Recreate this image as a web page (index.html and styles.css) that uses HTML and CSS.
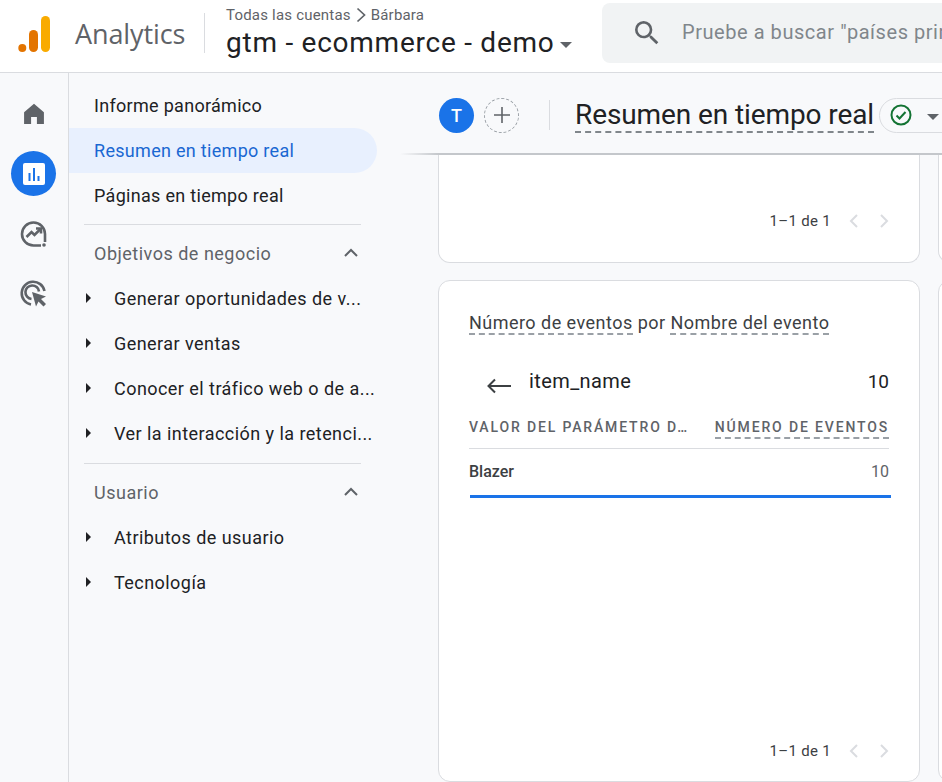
FILE: index.html
```html
<!DOCTYPE html>
<html lang="es">
<head>
    <meta charset="UTF-8">
    <title>Resumen en tiempo real - Analytics</title>
    <link rel="stylesheet" href="styles.css">
</head>
<body>

    <header class="topbar">
        <svg class="logo" width="34" height="38" viewBox="0 0 34 38">
            <circle cx="5.300" cy="33" r="4" fill="#e37400"/>
            <rect x="12" y="15" width="9" height="22" rx="4.500" fill="#e37400"/>
            <rect x="24" y="1" width="9" height="36" rx="4.500" fill="#f9ab00"/>
        </svg>
        <span class="brand">Analytics</span>
        <div class="topbar-sep"></div>
        <div class="account">
            <div class="crumbs">Todas las cuentas
                <svg width="12" height="16" viewBox="0 0 12 16"><path d="M2.500 1.500 9.500 8l-7 6.500" fill="none" stroke="#5f6368" stroke-width="1.700"/></svg>
                Bárbara</div>
            <div class="property">gtm - ecommerce - demo<span class="caret"></span></div>
        </div>
        <div class="search">
            <svg width="32" height="32" viewBox="0 0 24 24"><path d="M15.500 14h-.79l-.28-.27A6.470 6.470 0 0 0 16 9.500 6.500 6.500 0 1 0 9.500 16c1.610 0 3.090-.59 4.230-1.570l.27.28v.79l5 4.990L20.490 19l-4.990-5zm-6 0C7.010 14 5 11.990 5 9.500S7.010 5 9.500 5 14 7.010 14 9.500 11.990 14 9.500 14z" fill="#5f6368"/></svg>
            <span class="search-text">Pruebe a buscar "países principales por usuarios"</span>
        </div>
    </header>

    <div class="layout">
        <aside class="rail">
            <div class="rail-item">
                <svg width="28" height="28" viewBox="0 0 24 24"><path d="M12 3.200 3.500 10.600v10h6v-6h5v6h6v-10z" fill="#5f6368"/></svg>
            </div>
            <div class="rail-item rail-active">
                <svg width="24" height="24" viewBox="0 0 24 24"><rect x="1" y="1" width="22" height="22" rx="2" fill="#fff"/><path d="M6.500 11h2v8h-2zM11 6h2v13h-2zM15.500 14h2v5h-2z" fill="#1a73e8"/></svg>
            </div>
            <div class="rail-item">
                <svg width="28" height="28" viewBox="0 0 28 28" fill="none" stroke="#5f6368" stroke-width="2.600"><path d="M25 22V14A11.500 11.500 0 1 0 13.500 25.500H21"/><path d="M6.500 17l5-5 3 3 6-6"/><path d="M16 8.500h5v5"/><circle cx="24" cy="25" r="1.800" fill="#5f6368" stroke="none"/></svg>
            </div>
            <div class="rail-item">
                <svg width="28" height="28" viewBox="0 0 28 28" fill="none" stroke="#5f6368" stroke-width="2.600"><path d="M24.500 11A11.500 11.500 0 1 0 11 24.500"/><path d="M19 11.500A6.800 6.800 0 1 0 11.500 19"/><path d="M12 12l14 4.500-5 2.500 5 5-2.500 2.500-5-5-2.500 5z" fill="#5f6368" stroke="none"/></svg>
            </div>
        </aside>

        <nav class="sidenav">
            <a class="nav-link">Informe panorámico</a>
            <a class="nav-link nav-active">Resumen en tiempo real</a>
            <a class="nav-link">Páginas en tiempo real</a>
            <div class="nav-sep"></div>
            <div class="nav-group">Objetivos de negocio<svg width="16" height="10" viewBox="0 0 16 10"><path d="M2 8l6-6 6 6" fill="none" stroke="#5f6368" stroke-width="2"/></svg></div>
            <a class="nav-sub"><i class="tri"></i><span>Generar oportunidades de v...</span></a>
            <a class="nav-sub"><i class="tri"></i><span>Generar ventas</span></a>
            <a class="nav-sub"><i class="tri"></i><span>Conocer el tráfico web o de a...</span></a>
            <a class="nav-sub"><i class="tri"></i><span>Ver la interacción y la retenci...</span></a>
            <div class="nav-sep nav-sep-2"></div>
            <div class="nav-group">Usuario<svg width="16" height="10" viewBox="0 0 16 10"><path d="M2 8l6-6 6 6" fill="none" stroke="#5f6368" stroke-width="2"/></svg></div>
            <a class="nav-sub"><i class="tri"></i><span>Atributos de usuario</span></a>
            <a class="nav-sub"><i class="tri"></i><span>Tecnología</span></a>
        </nav>

        <main class="main">
            <div class="subhead">
                <span class="avatar">T</span>
                <span class="add-btn"><svg width="16" height="16" viewBox="0 0 16 16"><path d="M8 0v16M0 8h16" stroke="#5f6368" stroke-width="1.600"/></svg></span>
                <div class="subhead-sep"></div>
                <h1 class="page-title">Resumen en tiempo real</h1>
                <span class="status-pill">
                    <svg width="22" height="22" viewBox="0 0 22 22" fill="none" stroke="#137333" stroke-width="2"><circle cx="11" cy="11" r="9.500"/><path d="M6.500 11.500l3 3 6-6.500"/></svg>
                    <span class="caret caret-status"></span>
                </span>
            </div>
            <div class="cards">
                <section class="card card-cut">
                    <div class="pager">1–1 de 1
                        <svg width="14" height="16" viewBox="0 0 14 16"><path d="M10 2 4 8l6 6" fill="none" stroke="#dadce0" stroke-width="2"/></svg>
                        <svg width="14" height="16" viewBox="0 0 14 16"><path d="M4 2l6 6-6 6" fill="none" stroke="#dadce0" stroke-width="2"/></svg>
                    </div>
                </section>
                <section class="card card-cut"></section>
                <section class="card">
                    <h2 class="card-title"><span class="dashed">Número de eventos</span> por <span class="dashed">Nombre del evento</span></h2>
                    <div class="drill">
                        <svg width="26" height="16" viewBox="0 0 26 16"><path d="M25 8H3M9 1.500 2.500 8 9 14.500" fill="none" stroke="#3c4043" stroke-width="2"/></svg>
                        <span class="drill-name">item_name</span>
                        <span class="drill-count">10</span>
                    </div>
                    <div class="table-head">
                        <span class="col-label">VALOR DEL PARÁMETRO D…</span>
                        <span class="col-label col-dashed">NÚMERO DE EVENTOS</span>
                    </div>
                    <div class="table-row">
                        <span class="row-name">Blazer</span>
                        <span class="row-val">10</span>
                    </div>
                    <div class="bar"></div>
                    <div class="pager pager-end">1–1 de 1
                        <svg width="14" height="16" viewBox="0 0 14 16"><path d="M10 2 4 8l6 6" fill="none" stroke="#dadce0" stroke-width="2"/></svg>
                        <svg width="14" height="16" viewBox="0 0 14 16"><path d="M4 2l6 6-6 6" fill="none" stroke="#dadce0" stroke-width="2"/></svg>
                    </div>
                </section>
                <section class="card"></section>
            </div>
        </main>
    </div>

</body>
</html>
```

FILE: styles.css
```css
* {
    box-sizing: border-box;
}
html, body {
    margin: 0;
    height: 100%;
    overflow: hidden;
}
body {
    font-family: "Roboto", "Liberation Sans", sans-serif;
    background-color: #f8f9fb;
    color: #202124;
    display: flex;
    flex-direction: column;
}

/* Top bar */
.topbar {
    height: 73px;
    flex: none;
    display: flex;
    align-items: center;
    background-color: white;
    border-bottom: 1px solid #dadce0;
    padding-left: 17px;
    overflow: hidden;
}
.logo {
    flex: none;
    margin-top: -5px;
}
.brand {
    font-family: "Open Sans", sans-serif;
    font-size: 27px;
    letter-spacing: -0.1px;
    color: #5f6368;
    margin-left: 24px;
    margin-top: -6px;
    width: 127px;
    flex: none;
    white-space: nowrap;
}
.topbar-sep {
    width: 1px;
    height: 40px;
    background-color: #dadce0;
    margin: -6px 21px 0 2px;
    flex: none;
}
.account {
    flex: none;
    width: 376px;
    margin-top: -8px;
}
.crumbs {
    font-size: 15px;
    letter-spacing: 0.2px;
    color: #5f6368;
    line-height: 22px;
    display: flex;
    align-items: center;
    gap: 4px;
}
.property {
    font-size: 28px;
    letter-spacing: 0.75px;
    line-height: 34px;
    color: #202124;
    display: flex;
    align-items: center;
}
.caret {
    display: inline-block;
    width: 0;
    height: 0;
    border-left: 6px solid transparent;
    border-right: 6px solid transparent;
    border-top: 6px solid #5f6368;
    margin-left: 5px;
    margin-top: 3px;
}
.search {
    flex: none;
    width: 700px;
    height: 60px;
    margin-top: -6px;
    background-color: #f1f3f4;
    border-radius: 8px;
    display: flex;
    align-items: center;
    padding-left: 29px;
    gap: 19px;
}
.search-text {
    font-size: 20px;
    letter-spacing: 0.55px;
    color: #80868b;
    white-space: nowrap;
    margin-top: -2px;
}

/* Layout */
.layout {
    flex: 1;
    display: flex;
    min-height: 0;
}
.rail {
    width: 69px;
    flex: none;
    border-right: 1px solid #dadce0;
    display: flex;
    flex-direction: column;
    align-items: center;
    padding-top: 18px;
    gap: 15px;
    padding-right: 1px;
}
.rail-item {
    width: 45px;
    height: 45px;
    display: flex;
    align-items: center;
    justify-content: center;
    border-radius: 50%;
}
.rail-active {
    background-color: #1a73e8;
}

/* Side menu */
.sidenav {
    width: 331px;
    flex: none;
    padding-top: 10px;
}
.nav-link {
    display: block;
    width: 308px;
    height: 45px;
    line-height: 45px;
    padding-left: 25px;
    font-size: 18px;
    letter-spacing: 0.3px;
    color: #202124;
    border-radius: 0 23px 23px 0;
}
.nav-active {
    background-color: #e8f0fe;
    color: #1967d2;
}
.nav-sep {
    width: 277px;
    height: 1px;
    background-color: #dadce0;
    margin: 6px 0 0 15px;
}
.nav-sep-2 {
    margin-top: 7px;
}
.nav-group {
    width: 290px;
    height: 58px;
    padding-bottom: 2px;
    display: flex;
    align-items: center;
    justify-content: space-between;
    padding-left: 25px;
    font-size: 18px;
    letter-spacing: 0.5px;
    color: #5f6368;
}
.nav-group + .nav-sub {
    margin-top: -7px;
}
.nav-sub {
    display: flex;
    align-items: center;
    height: 45px;
    font-size: 18px;
    letter-spacing: 0.45px;
    color: #202124;
    padding-left: 17px;
    white-space: nowrap;
}
.nav-sub span {
    margin-left: 23px;
}
.tri {
    width: 0;
    height: 0;
    border-top: 5px solid transparent;
    border-bottom: 5px solid transparent;
    border-left: 5px solid #202124;
    margin-top: -2px;
}

/* Main column */
.main {
    flex: 1;
    min-width: 0;
    display: flex;
    flex-direction: column;
    overflow: hidden;
}
.subhead {
    height: 80px;
    flex: none;
    display: flex;
    align-items: center;
    padding: 4px 0 0 39px;
    background-color: #f8f9fb;
    position: relative;
    z-index: 1;
    white-space: nowrap;
}
/* line under the header, fades out towards the menu */
.subhead::after {
    content: "";
    position: absolute;
    left: 0;
    right: 0;
    bottom: -2px;
    height: 2px;
    background: linear-gradient(90deg, rgba(189, 193, 198, 0), #c4c7cb 38px);
}
.avatar {
    width: 35px;
    height: 35px;
    flex: none;
    border-radius: 50%;
    background-color: #1a73e8;
    color: white;
    font-size: 18px;
    font-weight: 500;
    text-align: center;
    line-height: 35px;
}
.add-btn {
    width: 35px;
    height: 35px;
    flex: none;
    margin-left: 10px;
    border: 1px dashed #9aa0a6;
    border-radius: 50%;
    display: flex;
    align-items: center;
    justify-content: center;
}
.subhead-sep {
    width: 1px;
    height: 30px;
    flex: none;
    background-color: #dadce0;
    margin: 0 25px 0 30px;
}
.page-title {
    font-size: 28px;
    font-weight: 400;
    letter-spacing: -0.1px;
    line-height: 33px;
    margin: 0;
    flex: none;
    border-bottom: 2px dashed #80868b;
    color: #202124;
}
.status-pill {
    flex: none;
    height: 35px;
    width: 90px;
    margin-left: 5px;
    border: 1px solid #dadce0;
    border-radius: 18px;
    display: flex;
    align-items: center;
    padding-left: 10px;
}
.caret-status {
    margin-left: 15px;
}

/* Cards */
.cards {
    flex: 1;
    display: grid;
    grid-template-columns: 482px 482px;
    grid-template-rows: 110px 502px;
    gap: 17px 18px;
    padding-left: 38px;
    min-height: 0;
}
.card {
    background-color: white;
    border: 1px solid #dadce0;
    border-radius: 12px;
    padding: 30px 30px 0;
    position: relative;
    display: flex;
    flex-direction: column;
}
.card-cut {
    border-top: 0;
    border-top-left-radius: 0;
    border-top-right-radius: 0;
}
.card-title {
    font-size: 18px;
    font-weight: 400;
    letter-spacing: 0.47px;
    line-height: 24px;
    color: #3c4043;
    margin: 0;
    white-space: nowrap;
}
.dashed {
    border-bottom: 2px dashed #9aa0a6;
}
.drill {
    display: flex;
    align-items: center;
    margin-top: 27px;
    height: 36px;
}
.drill svg {
    margin-left: 17px;
    margin-top: 11px;
}
.drill-name {
    font-size: 20px;
    letter-spacing: 0.4px;
    color: #202124;
    margin: 2px 0 0 17px;
}
.drill-count {
    font-size: 19px;
    color: #202124;
    margin: 2px 0 0 auto;
}
.table-head {
    display: flex;
    justify-content: space-between;
    margin-top: 19px;
    height: 32px;
    border-bottom: 1px solid #dadce0;
}
.col-label {
    font-size: 14px;
    font-weight: 500;
    letter-spacing: 1.85px;
    color: #5f6368;
    line-height: 20px;
    height: 22px;
    white-space: nowrap;
}
.col-dashed {
    border-bottom: 2px dashed #9aa0a6;
}
.table-row {
    display: flex;
    justify-content: space-between;
    align-items: center;
    height: 46px;
    padding-bottom: 2px;
    font-size: 16px;
    color: #3c4043;
}
.row-name {
    font-weight: 500;
}
.row-val {
    color: #5f6368;
}
.bar {
    height: 3px;
    width: 421px;
    margin-left: 1px;
    background-color: #1a73e8;
}
.pager {
    position: absolute;
    right: 28px;
    bottom: 32px;
    display: flex;
    align-items: center;
    gap: 16px;
    font-size: 15px;
    letter-spacing: 0.3px;
    color: #3c4043;
}
.pager-end {
    bottom: 21px;
}
```
